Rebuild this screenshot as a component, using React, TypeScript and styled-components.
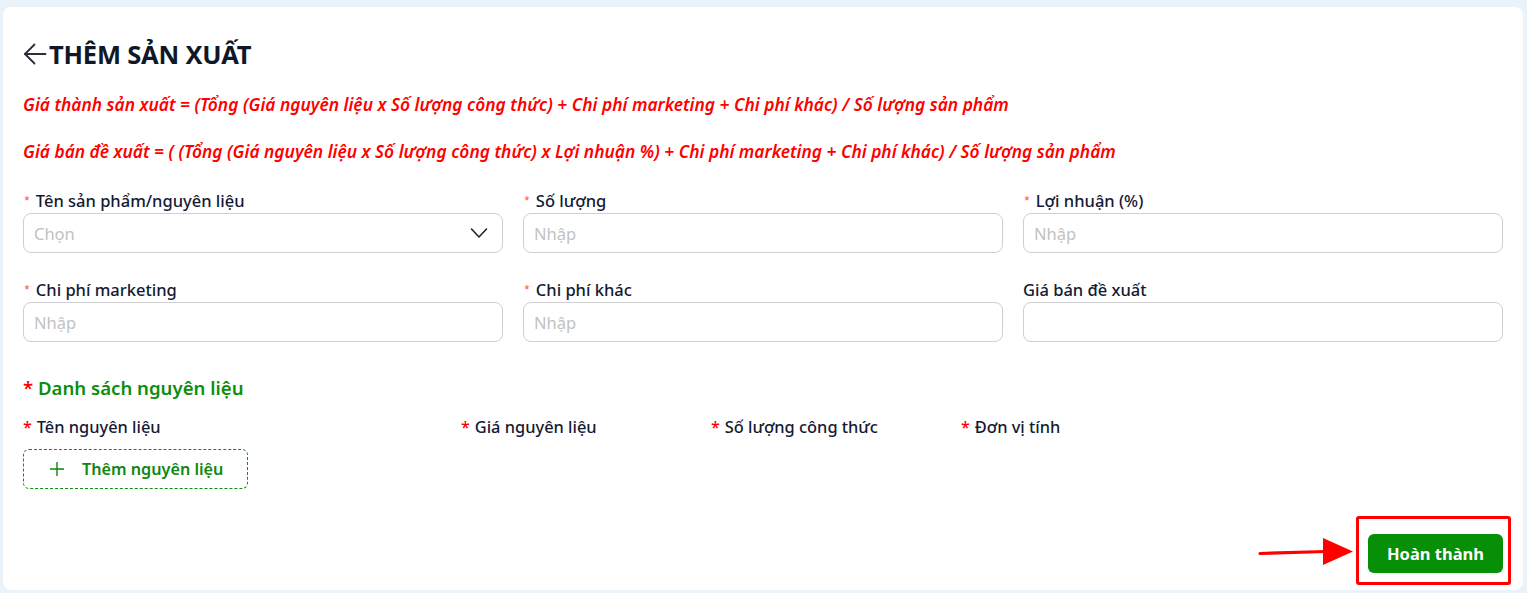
import styled, { createGlobalStyle } from 'styled-components'

const GlobalStyle = createGlobalStyle`
    html, body {
        margin: 0;
        padding: 0;
        background: #ebf3fa;
        font-family: 'Noto Sans', 'Open Sans', sans-serif;
    }
    * { box-sizing: border-box; }
`

const Page = styled.div`
    width: 100%;
    min-height: 593px;
    padding: 7px 4px 3px 3px;
`

const Card = styled.div`
    background: #ffffff;
    border-radius: 8px;
    padding: 30px 20px 17px 20px;
    display: flex;
    flex-direction: column;
`

const TitleRow = styled.div`
    display: flex;
    align-items: center;
    height: 34px;
    gap: 2px;
    color: #101828;
`

const BackIcon = styled.svg`
    width: 24px;
    height: 24px;
    flex-shrink: 0;
    cursor: pointer;
`

const Title = styled.h2`
    margin: 0;
    font-size: 25.5px;
    font-weight: 700;
    letter-spacing: -0.2px;
    color: #101828;
`

const Formulas = styled.div`
    display: flex;
    flex-direction: column;
    gap: 23px;
    margin-top: 21px;
`

const Formula = styled.p`
    margin: 0;
    font-size: 17.35px;
    line-height: 24px;
    font-style: italic;
    font-weight: 600;
    color: #ff0000;
`

const FieldGrid = styled.div`
    display: grid;
    grid-template-columns: repeat(3, 1fr);
    column-gap: 20px;
    row-gap: 25px;
    margin-top: 26px;
`

const Field = styled.div`
    display: flex;
    flex-direction: column;
`

const Label = styled.label`
    font-size: 16.5px;
    line-height: 24px;
    font-weight: 500;
    color: #141a33;
    display: flex;
    align-items: center;
`

const Star = styled.span<{ $strong?: boolean }>`
    color: ${p => (p.$strong ? '#ff0000' : '#ff4d4f')};
    font-size: ${p => (p.$strong ? '16px' : '13px')};
    font-family: ${p => (p.$strong ? "'Noto Sans', sans-serif" : "SimSun, 'Liberation Mono', monospace")};
    margin-right: ${p => (p.$strong ? '5px' : '5px')};
    line-height: 1;
`

const InputBox = styled.div`
    height: 40px;
    border: 1px solid #cfcfd4;
    border-radius: 8px;
    display: flex;
    align-items: center;
    padding: 0 14px 0 10px;
    background: #fff;
`

const Input = styled.input`
    border: none;
    outline: none;
    flex: 1;
    min-width: 0;
    font-size: 16.5px;
    font-family: inherit;
    color: #141a33;
    background: transparent;
    padding: 0;
    &::placeholder {
        color: #c2c2c2;
    }
`

const Chevron = styled.svg`
    width: 18px;
    height: 18px;
    flex-shrink: 0;
`

const SectionTitle = styled.h3`
    margin: 33px 0 0 0;
    font-size: 18.6px;
    line-height: 26px;
    font-weight: 600;
    color: #0a8f0a;
`

const RedStar = styled.span`
    color: #ff0000;
`

const IngredientHeader = styled.div`
    display: grid;
    grid-template-columns: 438px 250px 250px 1fr;
    margin-top: 15px;
`

const HeaderCell = styled.div`
    font-size: 16.4px;
    line-height: 22px;
    font-weight: 500;
    color: #141a33;
`

const AddButton = styled.button`
    margin-top: 11px;
    width: 225px;
    height: 40px;
    border: 1px dashed #138a13;
    border-radius: 6px;
    background: #fff;
    display: flex;
    align-items: center;
    gap: 18px;
    padding: 0 0 0 26px;
    color: #0e870e;
    font-family: inherit;
    font-size: 16.2px;
    font-weight: 600;
    cursor: pointer;
`

const PlusIcon = styled.svg`
    width: 14px;
    height: 14px;
`

const Footer = styled.div`
    display: flex;
    justify-content: flex-end;
    margin-top: 45px;
`

const SubmitWrap = styled.div`
    position: relative;
`

const SubmitButton = styled.button`
    width: 135px;
    height: 39px;
    border: none;
    border-radius: 6px;
    background: #078f07;
    color: #fff;
    font-family: inherit;
    font-size: 16.5px;
    font-weight: 700;
    cursor: pointer;
    box-shadow: 0 2px 0 rgba(0, 0, 0, 0.04);
`

const Highlight = styled.div`
    position: absolute;
    top: -18px;
    bottom: -12px;
    left: -12px;
    right: -8px;
    border: 3px solid #ff0000;
    border-radius: 3px;
    pointer-events: none;
`

const Pointer = styled.svg`
    position: absolute;
    left: -110px;
    top: 1px;
    width: 98px;
    height: 32px;
    pointer-events: none;
`

const fields = [
    { label: 'Tên sản phẩm/nguyên liệu', required: true, placeholder: 'Chọn', select: true },
    { label: 'Số lượng', required: true, placeholder: 'Nhập' },
    { label: 'Lợi nhuận (%)', required: true, placeholder: 'Nhập' },
    { label: 'Chi phí marketing', required: true, placeholder: 'Nhập' },
    { label: 'Chi phí khác', required: true, placeholder: 'Nhập' },
    { label: 'Giá bán đề xuất', required: false, placeholder: '' },
]

const ingredientCols = ['Tên nguyên liệu', 'Giá nguyên liệu', 'Số lượng công thức', 'Đơn vị tính']

export default function App() {
    return (
        <>
            <GlobalStyle />
            <Page>
                <Card>
                    <TitleRow>
                        <BackIcon viewBox="0 0 24 24" fill="none" stroke="#2b2f3a" strokeWidth="1.8" strokeLinecap="round" strokeLinejoin="round">
                            <path d="M22.5 12H2" />
                            <path d="M11.5 2.5L2 12l9.5 9.5" />
                        </BackIcon>
                        <Title>THÊM SẢN XUẤT</Title>
                    </TitleRow>

                    <Formulas>
                        <Formula>
                            Giá thành sản xuất = (Tổng (Giá nguyên liệu x Số lượng công thức) + Chi phí marketing + Chi phí khác) / Số lượng sản phẩm
                        </Formula>
                        <Formula>
                            Giá bán đề xuất = ( (Tổng (Giá nguyên liệu x Số lượng công thức) x Lợi nhuận %) + Chi phí marketing + Chi phí khác) / Số lượng sản phẩm
                        </Formula>
                    </Formulas>

                    <FieldGrid>
                        {fields.map(f => (
                            <Field key={f.label}>
                                <Label>
                                    {f.required && <Star>*</Star>}
                                    {f.label}
                                </Label>
                                <InputBox>
                                    <Input placeholder={f.placeholder} readOnly={f.select} />
                                    {f.select && (
                                        <Chevron viewBox="0 0 18 18" fill="none" stroke="#1f2433" strokeWidth="1.6" strokeLinecap="round" strokeLinejoin="round">
                                            <path d="M1.5 5l7.5 8 7.5-8" />
                                        </Chevron>
                                    )}
                                </InputBox>
                            </Field>
                        ))}
                    </FieldGrid>

                    <SectionTitle>
                        <RedStar>*</RedStar> Danh sách nguyên liệu
                    </SectionTitle>

                    <IngredientHeader>
                        {ingredientCols.map(c => (
                            <HeaderCell key={c}>
                                <Star $strong>*</Star>
                                {c}
                            </HeaderCell>
                        ))}
                    </IngredientHeader>

                    <AddButton>
                        <PlusIcon viewBox="0 0 14 14" fill="none" stroke="#0e870e" strokeWidth="1.4">
                            <path d="M7 0v14M0 7h14" />
                        </PlusIcon>
                        Thêm nguyên liệu
                    </AddButton>

                    <Footer>
                        <SubmitWrap>
                            <Pointer viewBox="0 0 98 32">
                                <path d="M2 18.5L68 16.5" stroke="#ff0000" strokeWidth="3.2" strokeLinecap="round" />
                                <path d="M65 3L95 16.5L65 30Z" fill="#ff0000" />
                            </Pointer>
                            <SubmitButton>Hoàn thành</SubmitButton>
                            <Highlight />
                        </SubmitWrap>
                    </Footer>
                </Card>
            </Page>
        </>
    )
}
